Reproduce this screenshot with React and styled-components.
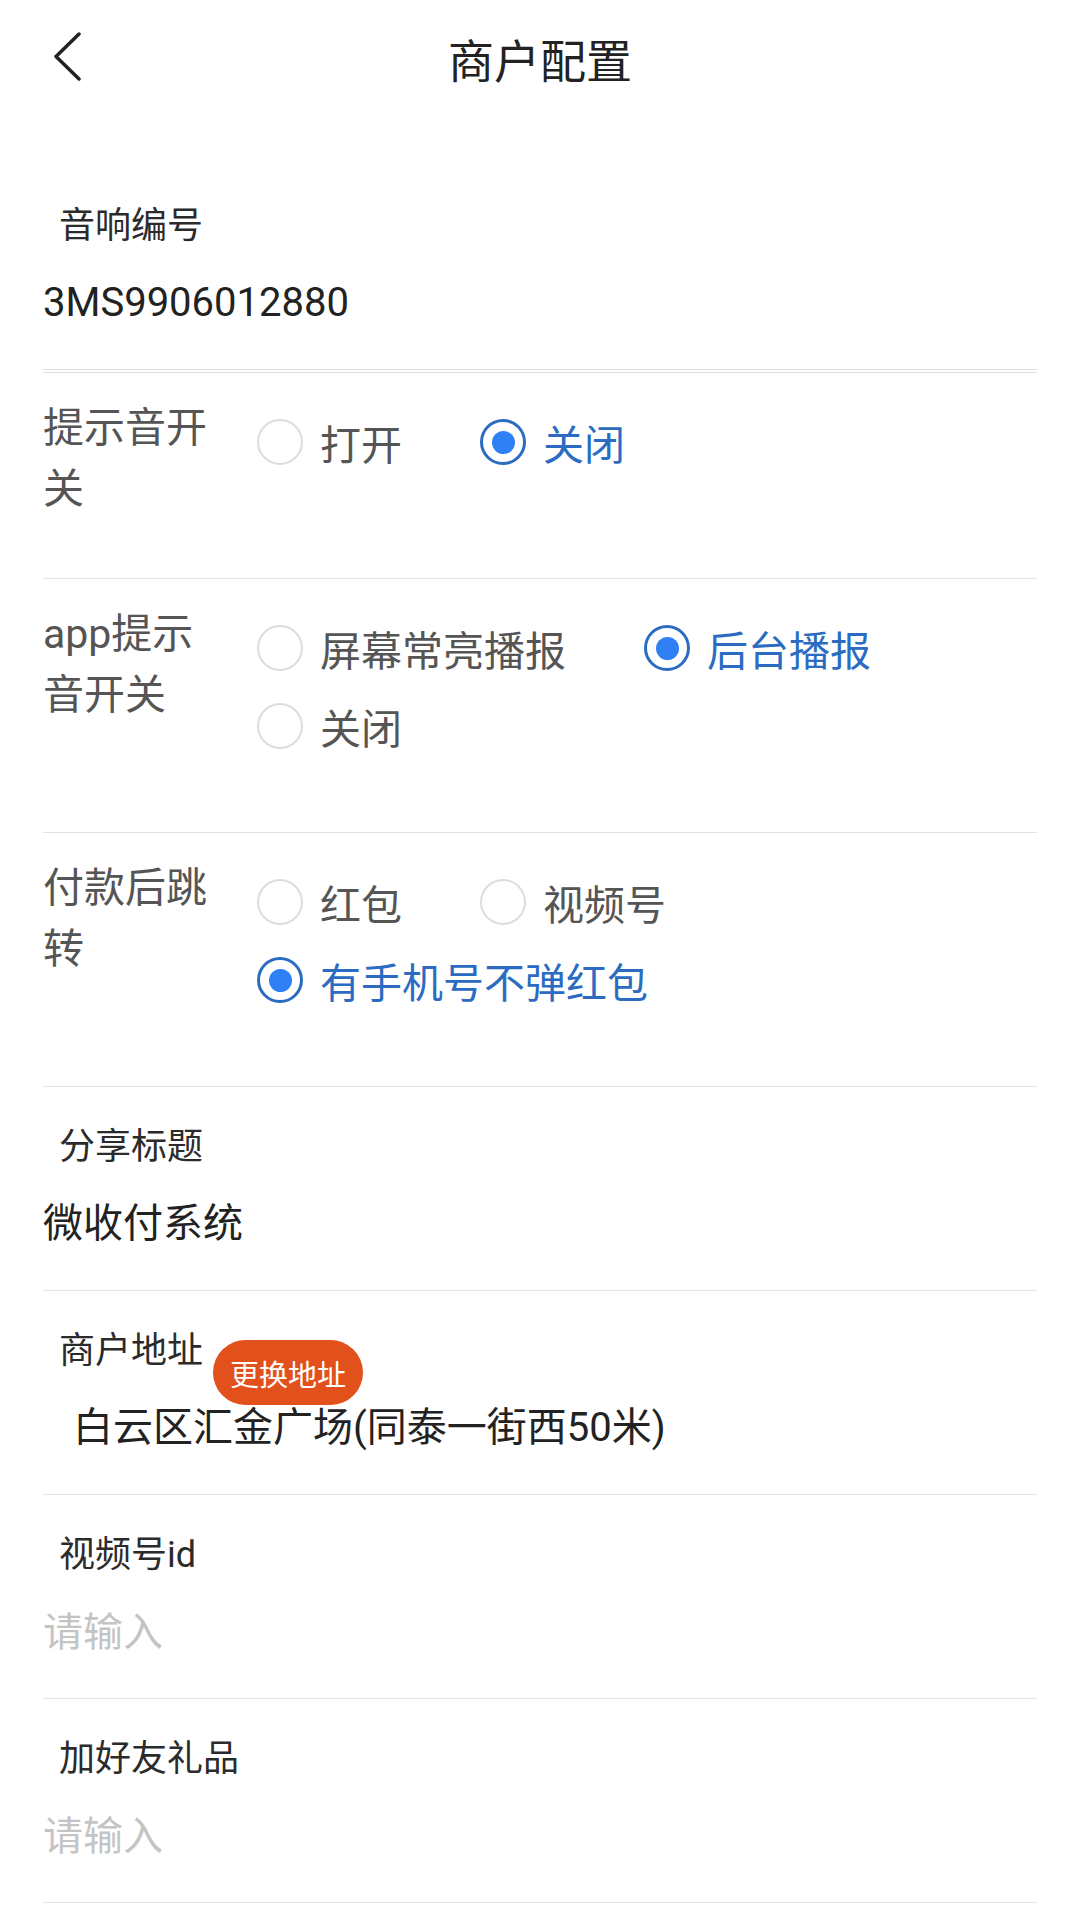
import React, { useState } from "react";
import styled, { createGlobalStyle } from "styled-components";

const GlobalStyle = createGlobalStyle`
  body {
    margin: 0;
    background: #ffffff;
    font-family: Roboto, "Noto Sans CJK SC", "Noto Sans", sans-serif;
  }
  * {
    box-sizing: border-box;
  }
`;

const Page = styled.div`
  width: 1080px;
  min-height: 1920px;
  background: #ffffff;
`;

const Header = styled.header`
  display: grid;
  grid-template-columns: 1fr auto 1fr;
  align-items: center;
  height: 124px;
`;

const BackButton = styled.button`
  justify-self: start;
  display: flex;
  align-items: center;
  padding: 0 0 10px 52px;
  border: none;
  background: none;
  cursor: pointer;
`;

const Title = styled.h1`
  margin: 0 0 8px;
  font-size: 46px;
  font-weight: 400;
  color: #222222;
`;

const Form = styled.div`
  padding: 42px 43px 0;
`;

// 上下排列的字段（标题在上，值在下）
const StackField = styled.div`
  padding: 35px 0 38px;
  border-bottom: ${({ $double }) =>
    $double ? "4px double #dcdcdc" : "1px solid #e3e3e3"};
`;

const FieldLabel = styled.div`
  display: flex;
  align-items: flex-start;
  padding-left: 16px;
  font-size: 36px;
  line-height: 50px;
  color: #2b2b2b;
`;

const FieldValue = styled.div`
  margin-top: 24px;
  padding-left: ${({ $indent }) => ($indent ? "30px" : "0")};
  font-size: 40px;
  line-height: 56px;
  color: #222222;
`;

const FieldInput = styled.input`
  display: block;
  width: 100%;
  height: 56px;
  margin-top: 24px;
  padding: 0;
  border: none;
  outline: none;
  background: transparent;
  font-family: inherit;
  font-size: 40px;
  color: #222222;

  &::placeholder {
    color: #c4c4c4;
  }
`;

const Badge = styled.button`
  display: inline-flex;
  align-items: center;
  height: 65px;
  margin: 14px 0 -29px 10px;
  padding: 0 17px;
  border: none;
  border-radius: 33px;
  background: #e2501c;
  color: #ffffff;
  font-family: inherit;
  font-size: 29px;
  cursor: pointer;
`;

// 左侧标题 + 右侧单选项
const RadioRow = styled.div`
  display: flex;
  align-items: flex-start;
  padding: 25px 0 58px;
  border-bottom: 1px solid #e3e3e3;
`;

const RowLabel = styled.div`
  flex-shrink: 0;
  width: 175px;
  margin-right: 39px;
  font-size: 41px;
  line-height: 61px;
  color: #555555;
`;

const Options = styled.div`
  flex: 1;
  display: flex;
  flex-wrap: wrap;
  margin-top: 14px;
`;

const Option = styled.label`
  display: flex;
  align-items: center;
  gap: 17px;
  height: 60px;
  margin: 0 78px 18px 0;
  font-size: 41px;
  color: ${({ $checked }) => ($checked ? "#2b6cc2" : "#555555")};
  cursor: pointer;
`;

const Circle = styled.span`
  display: flex;
  align-items: center;
  justify-content: center;
  width: 46px;
  height: 46px;
  border-radius: 50%;
  border: ${({ $checked }) =>
    $checked ? "3px solid #2b6cc2" : "2px solid #dddddd"};

  &::after {
    content: "";
    display: ${({ $checked }) => ($checked ? "block" : "none")};
    width: 23px;
    height: 23px;
    border-radius: 50%;
    background: #2f80f5;
  }
`;

function RadioGroup({ label, options, value, onChange }) {
  return (
    <RadioRow>
      <RowLabel>{label}</RowLabel>
      <Options>
        {options.map((opt) => (
          <Option
            key={opt}
            $checked={value === opt}
            onClick={() => onChange(opt)}
          >
            <Circle $checked={value === opt} />
            {opt}
          </Option>
        ))}
      </Options>
    </RadioRow>
  );
}

function BackIcon() {
  return (
    <svg width="32" height="50" viewBox="0 0 32 50">
      <path
        d="M27 2 L4 24.5 L27 47"
        fill="none"
        stroke="#222"
        strokeWidth="3.5"
        strokeLinecap="round"
        strokeLinejoin="round"
      />
    </svg>
  );
}

export default function App() {
  const [tone, setTone] = useState("关闭");
  const [appTone, setAppTone] = useState("后台播报");
  const [jump, setJump] = useState("有手机号不弹红包");
  const [videoId, setVideoId] = useState("");
  const [gift, setGift] = useState("");

  return (
    <Page>
      <GlobalStyle />
      <Header>
        <BackButton>
          <BackIcon />
        </BackButton>
        <Title>商户配置</Title>
        <div />
      </Header>
      <Form>
        <StackField $double>
          <FieldLabel>音响编号</FieldLabel>
          <FieldValue>3MS9906012880</FieldValue>
        </StackField>

        <RadioGroup
          label="提示音开关"
          options={["打开", "关闭"]}
          value={tone}
          onChange={setTone}
        />
        <RadioGroup
          label="app提示音开关"
          options={["屏幕常亮播报", "后台播报", "关闭"]}
          value={appTone}
          onChange={setAppTone}
        />
        <RadioGroup
          label="付款后跳转"
          options={["红包", "视频号", "有手机号不弹红包"]}
          value={jump}
          onChange={setJump}
        />

        <StackField>
          <FieldLabel>分享标题</FieldLabel>
          <FieldValue>微收付系统</FieldValue>
        </StackField>

        <StackField>
          <FieldLabel>
            商户地址
            <Badge>更换地址</Badge>
          </FieldLabel>
          <FieldValue $indent>白云区汇金广场(同泰一街西50米)</FieldValue>
        </StackField>

        <StackField>
          <FieldLabel>视频号id</FieldLabel>
          <FieldInput
            placeholder="请输入"
            value={videoId}
            onChange={(e) => setVideoId(e.target.value)}
          />
        </StackField>

        <StackField>
          <FieldLabel>加好友礼品</FieldLabel>
          <FieldInput
            placeholder="请输入"
            value={gift}
            onChange={(e) => setGift(e.target.value)}
          />
        </StackField>
      </Form>
    </Page>
  );
}
